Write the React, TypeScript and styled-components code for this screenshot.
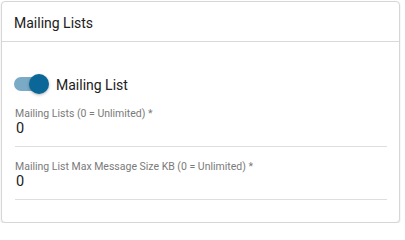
import styled, { createGlobalStyle } from 'styled-components';

const GlobalStyle = createGlobalStyle`
	body {
		margin: 0;
		background: #ffffff;
		font-family: Roboto, "Liberation Sans", Arial, sans-serif;
	}
`;

const Card = styled.section`
	box-sizing: border-box;
	width: 399px;
	height: 222px;
	margin: 1px 0 0 1px;
	border: 1px solid #d6d6d6;
	border-radius: 4px;
	background: #fff;
	box-shadow: 0 1px 2px rgba(0, 0, 0, 0.12);
	overflow: hidden;
`;

const CardHeader = styled.header`
	height: 39px;
	display: flex;
	align-items: center;
	padding: 0 12px;
	border-bottom: 1px solid #d9d9d9;
`;

const Title = styled.h2`
	margin: 0;
	font-size: 14px;
	font-weight: 400;
	color: #212121;
	padding-top: 2px;
`;

const CardBody = styled.div`
	padding: 32px 11px 0 13px;
`;

const ToggleRow = styled.label`
	display: flex;
	align-items: center;
	gap: 8px;
	height: 20px;
	margin-left: -1px;
`;

const Track = styled.span<{ $on: boolean }>`
	position: relative;
	width: 34px;
	height: 14px;
	border-radius: 7px;
	background: ${(p) => (p.$on ? '#7aaac6' : '#bdbdbd')};
`;

const Thumb = styled.span<{ $on: boolean }>`
	position: absolute;
	top: -3px;
	left: ${(p) => (p.$on ? '15px' : '-1px')};
	width: 20px;
	height: 20px;
	border-radius: 50%;
	background: ${(p) => (p.$on ? '#0b6797' : '#f5f5f5')};
	box-shadow: 0 1px 3px rgba(0, 0, 0, 0.3);
`;

const ToggleText = styled.span`
	font-size: 14px;
	color: #212121;
	padding-top: 1px;
`;

const Field = styled.div<{ $first?: boolean }>`
	margin-top: 14px;
	width: 372px;
	padding-bottom: 9px;
	border-bottom: 1px solid #dedede;
`;

const FieldLabel = styled.div`
	font-size: 10.5px;
	line-height: 12px;
	color: #7a7a7a;
`;

const FieldValue = styled.div`
	font-size: 14.5px;
	line-height: 16px;
	color: #212121;
	margin-top: 1px;
	padding-left: 1px;
`;

const fields = [
	{ label: 'Mailing Lists (0 = Unlimited) *', value: '0' },
	{ label: 'Mailing List Max Message Size KB (0 = Unlimited) *', value: '0' },
];

export default function App() {
	return (
		<>
			<GlobalStyle />
			<Card>
				<CardHeader>
					<Title>Mailing Lists</Title>
				</CardHeader>
				<CardBody>
					<ToggleRow>
						<Track $on>
							<Thumb $on />
						</Track>
						<ToggleText>Mailing List</ToggleText>
					</ToggleRow>
					{fields.map((f) => (
						<Field key={f.label}>
							<FieldLabel>{f.label}</FieldLabel>
							<FieldValue>{f.value}</FieldValue>
						</Field>
					))}
				</CardBody>
			</Card>
		</>
	);
}
